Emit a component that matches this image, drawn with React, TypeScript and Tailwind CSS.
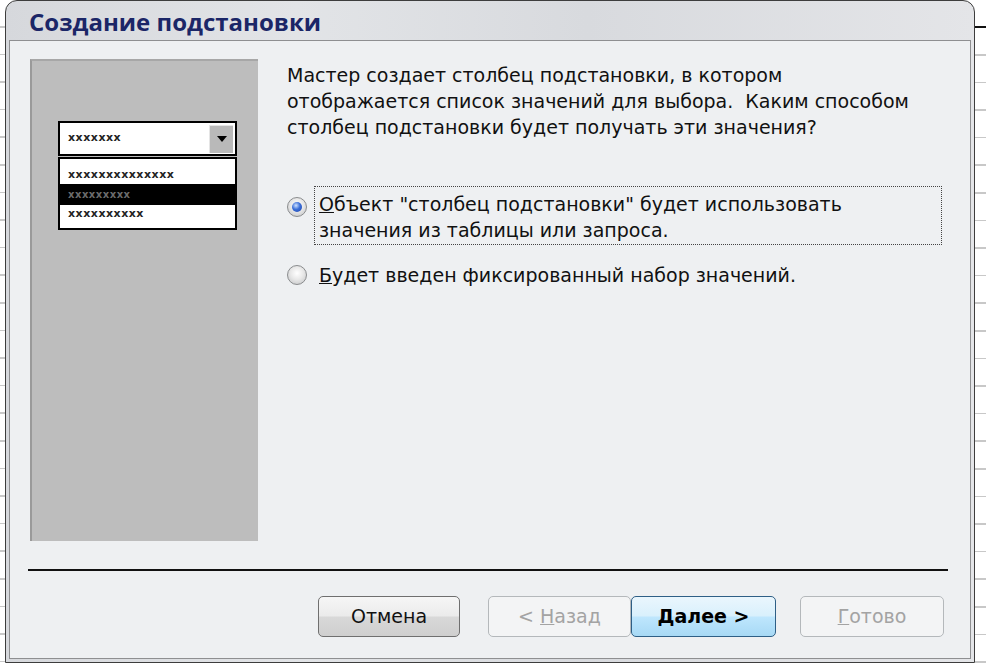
import React from "react";

const body = { fontFamily: '"DejaVu Sans", "Liberation Sans", sans-serif' };

function Radio({ checked }: { checked?: boolean }) {
  return (
    <div className="w-[20px] h-[20px] shrink-0 rounded-full border border-[#8a8c8e] bg-[radial-gradient(circle_at_50%_40%,#ffffff_0%,#e8e8e8_45%,#bfc1c3_100%)] flex items-center justify-center">
      {checked && (
        <div className="w-[10px] h-[10px] rounded-full bg-[radial-gradient(circle_at_40%_35%,#cfe2ff_0%,#3b6fd8_45%,#1a3fa8_100%)]" />
      )}
    </div>
  );
}

function Btn({
  children,
  kind,
  w,
}: {
  children: React.ReactNode;
  kind: "normal" | "disabled" | "default";
  w: string;
}) {
  const cls =
    kind === "normal"
      ? "border-[#6f6f6f] bg-[linear-gradient(to_bottom,#f6f6f6_0%,#ebebeb_48%,#d8d8d8_52%,#cfcfcf_100%)] text-[#111]"
      : kind === "default"
      ? "border-[#2e5f86] bg-[linear-gradient(to_bottom,#eaf6fd_0%,#d9f0fc_48%,#bee6fd_52%,#a7d9f5_100%)] text-black font-bold"
      : "border-[#b4b8bb] bg-[#f3f4f5] text-[#a3a3a3]";
  return (
    <div
      className={`${w} h-[41px] rounded-[5px] border flex items-center justify-center text-[19px] ${cls}`}
      style={body}
    >
      {children}
    </div>
  );
}

export default function App() {
  return (
    <div className="w-[986px] h-[666px] bg-white flex overflow-hidden">
      <div className="w-[5px] h-full shrink-0 bg-[repeating-linear-gradient(to_bottom,transparent_0px,transparent_26px,#c8c8c8_26px,#c8c8c8_27.6px)]" />
      <div className="w-[970px] h-[663px] shrink-0 flex flex-col rounded-t-[12px] border border-[#3d3d3d] bg-[linear-gradient(to_right,#d6d8dc_0%,#e2e4e7_30%,#d8dade_60%,#e4e5e8_100%)] px-[3px] pb-[3px]">
        <div
          className="h-[39px] shrink-0 flex items-center pl-[20px] pt-[3px] text-[#1b2667] font-bold text-[24px]"
          style={{ fontFamily: '"Open Sans", "Liberation Sans", sans-serif' }}
        >
          Создание подстановки
        </div>
        <div className="flex-1 flex flex-col border border-[#8e8f91] bg-[#eef0f2]">
          <div className="flex pt-[18px] pl-[20px]">
            <div className="w-[228px] h-[482px] shrink-0 bg-[#bdbdbd] border-l-2 border-t-2 border-l-[#9a9a9a] border-t-[#a7a7a7] pt-[60px] pl-[26px]">
              <div className="w-[179px] h-[35px] bg-white border-2 border-black flex items-center justify-between pl-[8px] pr-[2px]">
                <span className="text-[11px] font-bold text-[#222] tracking-[0.5px]" style={body}>
                  xxxxxxx
                </span>
                <div className="w-[24px] h-[28px] bg-[#b9b9b9] border-l border-t border-[#e5e5e5] border-r-[#777] border-b-[#777] flex items-center justify-center">
                  <svg width="10" height="6" viewBox="0 0 10 6">
                    <polygon points="0,0 10,0 5,6" fill="#000" />
                  </svg>
                </div>
              </div>
              <div className="w-[179px] h-[73px] mt-[1px] bg-white border-2 border-black flex flex-col pt-[7px]">
                <div className="h-[18px] flex items-center pl-[8px] text-[11px] font-bold text-[#222] tracking-[0.5px]" style={body}>
                  xxxxxxxxxxxxxx
                </div>
                <div className="h-[21px] bg-black flex items-center pl-[8px] text-[10px] font-bold text-[#6c6c6c] tracking-[0.5px]" style={body}>
                  xxxxxxxxx
                </div>
                <div className="h-[18px] flex items-center pl-[8px] text-[11px] font-bold text-[#222] tracking-[0.5px]" style={body}>
                  xxxxxxxxxx
                </div>
              </div>
            </div>
            <div className="ml-[29px] flex flex-col text-[19px] leading-[26px] text-[#111]" style={body}>
              <p className="mt-[3px]">
                Мастер создает столбец подстановки, в котором
                <br />
                отображается список значений для выбора.&nbsp; Каким способом
                <br />
                столбец подстановки будет получать эти значения?
              </p>
              <div className="flex items-start mt-[46px]">
                <div className="mt-[11px]">
                  <Radio checked />
                </div>
                <div className="ml-[7px] w-[628px] h-[59px] border border-dotted border-[#444] pl-[4px] pt-[4px]">
                  <span className="underline">О</span>бъект "столбец подстановки" будет использовать
                  <br />
                  значения из таблицы или запроса.
                </div>
              </div>
              <div className="flex items-center mt-[17px]">
                <Radio />
                <div className="ml-[12px]">
                  <span className="underline">Б</span>удет введен фиксированный набор значений.
                </div>
              </div>
            </div>
          </div>
          <div className="mt-[28px] ml-[18px] mr-[22px] h-[2px] bg-[#111]" />
          <div className="flex mt-[25px] pl-[308px]">
            <Btn kind="normal" w="w-[142px]">
              Отмена
            </Btn>
            <div className="ml-[28px]">
              <Btn kind="disabled" w="w-[143px]">
                &lt;&nbsp;<span className="underline">Н</span>азад
              </Btn>
            </div>
            <Btn kind="default" w="w-[145px]">
              <span className="underline">Д</span>алее &gt;
            </Btn>
            <div className="ml-[24px]">
              <Btn kind="disabled" w="w-[144px]">
                <span className="underline">Г</span>отово
              </Btn>
            </div>
          </div>
        </div>
      </div>
      <div className="flex-1 h-full pt-[26px]">
        <div className="h-[2px] bg-[#111]" />
        <div className="h-full bg-[repeating-linear-gradient(to_bottom,transparent_0px,transparent_26px,#c8c8c8_26px,#c8c8c8_27.6px)]" />
      </div>
    </div>
  );
}
